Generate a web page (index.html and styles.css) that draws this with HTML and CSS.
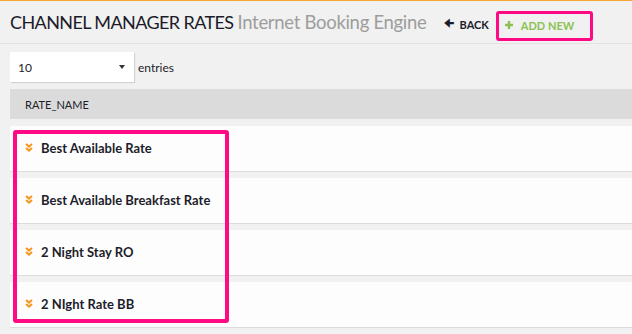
FILE: index.html
```html
<!DOCTYPE html>
<html lang="en">
<head>
    <meta charset="UTF-8">
    <meta name="viewport" content="width=device-width, initial-scale=1.0">
    <title>Channel Manager Rates</title>
    <link rel="stylesheet" href="styles.css">
</head>
<body>
    <div class="page-header">
        <h1 class="title">CHANNEL MANAGER RATES <small>Internet Booking Engine</small></h1>
        <a class="btn-back" href="#"><span class="arrow">&#129032;</span> BACK</a>
        <a class="btn-add" href="#"><svg class="plus" viewBox="0 0 8 8"><path d="M4 0v8M0 4h8" /></svg> ADD NEW</a>
    </div>

    <div class="content">
        <div class="length">
            <div class="select"><span>10</span><span class="caret"></span></div>
            <span class="entries">entries</span>
        </div>

        <div class="table">
            <div class="thead">RATE_NAME</div>
            <div class="row"><svg class="chev" viewBox="0 0 8 9"><path d="M1 1l3 2.6 3-2.6M1 5l3 2.6 3-2.6" /></svg>Best Available Rate</div>
            <div class="row"><svg class="chev" viewBox="0 0 8 9"><path d="M1 1l3 2.6 3-2.6M1 5l3 2.6 3-2.6" /></svg>Best Available Breakfast Rate</div>
            <div class="row"><svg class="chev" viewBox="0 0 8 9"><path d="M1 1l3 2.6 3-2.6M1 5l3 2.6 3-2.6" /></svg>2 Night Stay RO</div>
            <div class="row"><svg class="chev" viewBox="0 0 8 9"><path d="M1 1l3 2.6 3-2.6M1 5l3 2.6 3-2.6" /></svg>2 NIght Rate BB</div>
        </div>
    </div>

    <!-- annotation box drawn over the rate names -->
    <div class="highlight"></div>
</body>
</html>
```

FILE: styles.css
```css
* { box-sizing: border-box; margin: 0; padding: 0; }
body { font-family: 'Lato', 'Liberation Sans', sans-serif; background: #f1f1f1; border-top: 1px solid #f6a536; width: 632px; height: 334px; overflow: hidden; position: relative; color: #1d1d2b; }

.page-header { display: flex; align-items: center; height: 43px; padding: 0 10px; border-bottom: 1px solid #e2e2e2; white-space: nowrap; }
.title { font-size: 18px; font-weight: 400; color: #1b1b2a; letter-spacing: -0.6px; }
.title small { font-size: 18.5px; color: #9d9d9d; letter-spacing: -0.3px; }

.btn-back { margin: 4px 0 0 17px; font-size: 11px; font-weight: 700; color: #1b1b2a; text-decoration: none; display: flex; align-items: center; gap: 6px; }
.btn-back .arrow { font-size: 11px; font-family: 'DejaVu Sans', sans-serif; }
.btn-add { margin: 7px 0 0 7px; height: 30px; padding: 0 16px 0 6px; border: 3px solid #ff0a84; border-radius: 3px; display: flex; align-items: center; gap: 8px; font-size: 11px; font-weight: 700; color: #8cc152; text-decoration: none; }
.btn-add .plus { width: 8px; height: 8px; stroke: #8cc152; stroke-width: 2.4; margin-bottom: 2px; }

.content { padding-left: 10px; }
.length { display: flex; align-items: center; gap: 4px; margin-top: 8px; }
.select { width: 124px; height: 30px; background: #fff; box-shadow: 1px 1px 1px rgba(0,0,0,0.12); display: flex; align-items: center; justify-content: space-between; padding: 0 8px 0 8px; font-size: 12px; }
.caret { border-left: 3px solid transparent; border-right: 3px solid transparent; border-top: 4px solid #333; margin-right: 1px; }
.entries { font-size: 12px; }

.table { margin-top: 7px; }
.thead { height: 30px; background: #dbdbdb; display: flex; align-items: center; padding-left: 15px; font-size: 11px; margin-bottom: 7px; }
.row { height: 46px; background: #fdfdfd; border-bottom: 1px solid #dcdcdc; margin-bottom: 6px; display: flex; align-items: center; padding: 0 0 2px 15px; font-size: 13px; font-weight: 700; gap: 8px; }
.chev { width: 8px; height: 9px; fill: none; stroke: #f6961e; stroke-width: 2; }

.highlight { position: absolute; left: 13px; top: 129px; width: 216px; height: 193px; border: 4px solid #ff0a84; border-radius: 3px; }
```
